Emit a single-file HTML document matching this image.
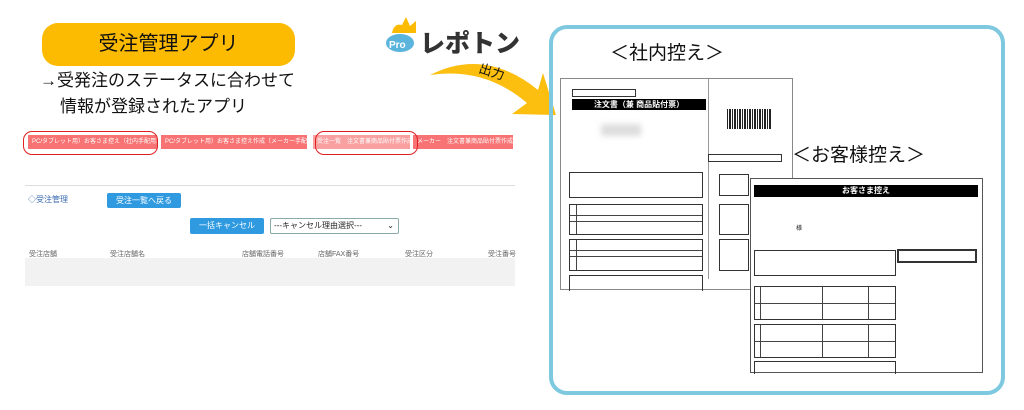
<!DOCTYPE html>
<html><head><meta charset="utf-8"><style>
*{margin:0;padding:0;box-sizing:border-box}
body{width:1024px;height:410px;background:#fff;position:relative;overflow:hidden;font-family:"Liberation Sans","Noto Sans CJK JP",sans-serif;color:#222}
.a{position:absolute}
.pill{left:42px;top:23px;width:253px;height:43px;background:#fcbb00;border-radius:16px;font-size:20px;text-align:center;line-height:43px;color:#111}
.t{font-size:17px;color:#111;white-space:nowrap}
.btn{background:#f87373;color:#fff;font-size:6px;height:14px;line-height:14px;padding:0 4px;white-space:nowrap;overflow:hidden}
.ring{border:1.5px solid #e02020;border-radius:9px}
.bb{background:#2f9ae0;color:#fff;font-size:8px;text-align:center;border-radius:2px}
.hd{font-size:7px;color:#666}
.panel{left:549px;top:25px;width:456px;height:370px;border:4px solid #7ec8e0;border-radius:18px}
.doc{background:#fff;border:1px solid #888}
.bar{background:#000;color:#fff;font-weight:bold;text-align:center;white-space:nowrap}
.box{border:1px solid #333}
.hl{position:absolute;height:1px;background:#444}
.vl{position:absolute;width:1px;background:#444}
.lbl{font-size:19px;color:#111;white-space:nowrap}
</style></head><body>
<div class="a pill">受注管理アプリ</div>
<div class="a t" style="left:40px;top:66px">→受発注のステータスに合わせて</div>
<div class="a t" style="left:60px;top:92px">情報が登録されたアプリ</div>

<div class="a btn" style="left:28px;top:135px;width:129px">PC/タブレット用）お客さま控え（社内手配用）</div>
<div class="a btn" style="left:161px;top:135px;width:146px">PC/タブレット用）お客さま控え作成（メーカー手配用）</div>
<div class="a btn" style="left:313px;top:135px;width:97px;background:#f9a0a0">受注一覧　注文書兼商品貼付票作成</div>
<div class="a btn" style="left:413px;top:135px;width:100px">メーカー　注文書兼商品貼付票作成</div>
<div class="a ring" style="left:23px;top:131px;width:135px;height:24px"></div>
<div class="a ring" style="left:315px;top:131px;width:103px;height:24px"></div>
<div class="a" style="left:25px;top:185px;width:490px;height:1px;background:#ddd"></div>
<div class="a" style="left:28px;top:194px;font-size:8px;color:#3a6ab0">◇受注管理</div>
<div class="a bb" style="left:107px;top:193px;width:74px;height:15px;line-height:15px">受注一覧へ戻る</div>
<div class="a bb" style="left:190px;top:218px;width:74px;height:16px;line-height:16px">一括キャンセル</div>
<div class="a" style="left:270px;top:218px;width:129px;height:16px;border:1px solid #8aa;font-size:8px;line-height:14px;padding-left:3px;border-radius:2px">---キャンセル理由選択---<span style="position:absolute;right:4px">⌄</span></div>
<div class="a hd" style="left:29px;top:249px">受注店舗</div>
<div class="a hd" style="left:110px;top:249px">受注店舗名</div>
<div class="a hd" style="left:242px;top:249px">店舗電話番号</div>
<div class="a hd" style="left:318px;top:249px">店舗FAX番号</div>
<div class="a hd" style="left:405px;top:249px">受注区分</div>
<div class="a hd" style="left:488px;top:249px">受注番号</div>
<div class="a" style="left:25px;top:258px;width:490px;height:28px;background:#f2f2f2"></div>

<svg class="a" style="left:380px;top:15px" width="190" height="110">
<path d="M12 18 Q14 8 22 10 L26 2 L30 11 L36 6 L36 18 Z" fill="#fcbb00"/>
<ellipse cx="20" cy="28" rx="14" ry="9" fill="#5ab4dc"/>
<text x="9" y="33" font-size="10" font-weight="bold" fill="#fff" font-family="Liberation Sans">Pro</text>
<text x="40" y="37" font-size="25" font-weight="900" fill="#333" font-family="Noto Sans CJK JP,sans-serif">レポトン</text>
<path d="M50 60 Q105 32 158 75 L163 58 L176 100 L132 99 L147 88 Q105 52 50 60 Z" fill="#fcbf10"/>
<text x="98" y="57" font-size="13" fill="#111" transform="rotate(18 98 57)" font-family="Noto Sans CJK JP,sans-serif">出力</text>
</svg>

<div class="a panel"></div>
<div class="a lbl" style="left:610px;top:38px">＜社内控え＞</div>
<div class="a doc" style="left:560px;top:78px;width:233px;height:212px">
 <div class="a box" style="left:11px;top:10px;width:64px;height:8px"></div>
 <div class="a bar" style="left:11px;top:20px;width:134px;height:11px;font-size:8px;line-height:11px">注文書（兼 商品貼付票）</div>
 <div class="a" style="left:147px;top:0;width:1px;height:200px;background:#999"></div>
 <div class="a" style="left:166px;top:30px;width:45px;height:20px;background:repeating-linear-gradient(90deg,#222 0 1px,#fff 1px 2px,#222 2px 4px,#fff 4px 5px)"></div>
 <div class="a box" style="left:147px;top:75px;width:74px;height:8px"></div>
 <div class="a" style="left:40px;top:45px;width:40px;height:12px;background:#ddd;filter:blur(3px)"></div>
 <div class="a box" style="left:8px;top:93px;width:134px;height:26px"></div>
 <div class="a box" style="left:8px;top:125px;width:134px;height:31px"><div class="hl" style="left:0;right:0;top:10px"></div><div class="hl" style="left:0;right:0;top:16px"></div><div class="vl" style="left:6px;top:0;bottom:0"></div></div>
 <div class="a box" style="left:8px;top:160px;width:134px;height:32px"><div class="hl" style="left:0;right:0;top:10px"></div><div class="hl" style="left:0;right:0;top:16px"></div><div class="vl" style="left:6px;top:0;bottom:0"></div></div>
 <div class="a box" style="left:8px;top:196px;width:134px;height:16px;border-bottom:none"></div>
 <div class="a box" style="left:158px;top:95px;width:30px;height:22px"></div>
 <div class="a box" style="left:158px;top:125px;width:30px;height:31px"></div>
 <div class="a box" style="left:158px;top:160px;width:30px;height:32px"></div>
</div>
<div class="a lbl" style="left:792px;top:140px">＜お客様控え＞</div>
<div class="a doc" style="left:750px;top:178px;width:233px;height:195px;border-color:#555">
 <div class="a bar" style="left:3px;top:6px;width:224px;height:12px;font-size:8px;line-height:12px">お客さま控え</div>
 <div class="a" style="left:45px;top:44px;font-size:6px">様</div>
 <div class="a box" style="left:3px;top:71px;width:142px;height:26px"></div>
 <div class="a box" style="left:146px;top:70px;width:80px;height:14px;border-width:2px"></div>
 <div class="a box" style="left:3px;top:107px;width:142px;height:34px"><div class="hl" style="left:0;right:0;top:16px"></div><div class="vl" style="left:5px;top:0;bottom:0"></div><div class="vl" style="left:67px;top:0;bottom:0"></div><div class="vl" style="left:113px;top:0;bottom:0"></div></div>
 <div class="a box" style="left:3px;top:145px;width:142px;height:34px"><div class="hl" style="left:0;right:0;top:16px"></div><div class="vl" style="left:5px;top:0;bottom:0"></div><div class="vl" style="left:67px;top:0;bottom:0"></div><div class="vl" style="left:113px;top:0;bottom:0"></div></div>
 <div class="a box" style="left:3px;top:182px;width:142px;height:13px;border-bottom:none"></div>
</div>
</body></html>
